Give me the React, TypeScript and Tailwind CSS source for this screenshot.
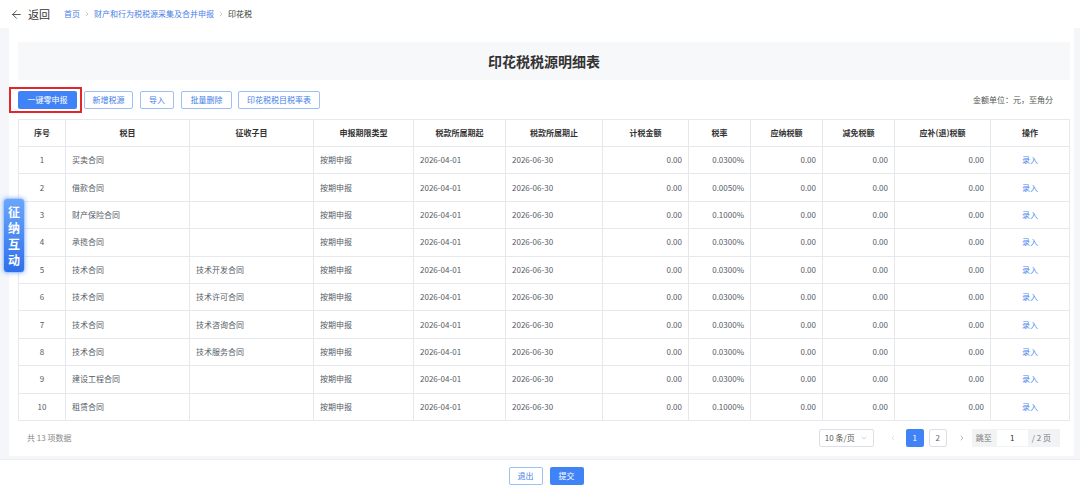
import React from "react";
import { ArrowLeft, ChevronRight, ChevronLeft, ChevronDown } from "lucide-react";

type Row = {
  no: number;
  item: string;
  sub: string;
  rate: string;
};

const rows: Row[] = [
  { no: 1, item: "买卖合同", sub: "", rate: "0.0300%" },
  { no: 2, item: "借款合同", sub: "", rate: "0.0050%" },
  { no: 3, item: "财产保险合同", sub: "", rate: "0.1000%" },
  { no: 4, item: "承揽合同", sub: "", rate: "0.0300%" },
  { no: 5, item: "技术合同", sub: "技术开发合同", rate: "0.0300%" },
  { no: 6, item: "技术合同", sub: "技术许可合同", rate: "0.0300%" },
  { no: 7, item: "技术合同", sub: "技术咨询合同", rate: "0.0300%" },
  { no: 8, item: "技术合同", sub: "技术服务合同", rate: "0.0300%" },
  { no: 9, item: "建设工程合同", sub: "", rate: "0.0300%" },
  { no: 10, item: "租赁合同", sub: "", rate: "0.1000%" },
];

const headers = [
  "序号",
  "税目",
  "征收子目",
  "申报期限类型",
  "税款所属期起",
  "税款所属期止",
  "计税金额",
  "税率",
  "应纳税额",
  "减免税额",
  "应补(退)税额",
  "操作",
];

const colWidths = [47, 124, 124, 100, 92, 97, 86, 62, 72, 72, 96, 79];

const cell = "border border-[#e6e8eb] px-[6px]";

export default function App() {
  return (
    <div
      className="w-[1080px] h-[491px] flex flex-col bg-white text-[8px] text-[#555b66] relative overflow-hidden"
      style={{ fontFamily: '"Noto Sans CJK SC", "Noto Sans", sans-serif' }}
    >
      {/* Top bar */}
      <div className="h-[28px] flex items-center pl-[10px] shrink-0">
        <div className="flex items-center gap-[5px] text-[#333]">
          <ArrowLeft className="w-[13px] h-[13px]" strokeWidth={1.5} />
          <span className="text-[11px] leading-none">返回</span>
        </div>
        <div className="flex items-center ml-[14px] gap-[3px] leading-none">
          <span className="text-[#4a80e6]">首页</span>
          <ChevronRight className="w-[8px] h-[8px] text-[#999]" strokeWidth={1.5} />
          <span className="text-[#4a80e6]">财产和行为税税源采集及合并申报</span>
          <ChevronRight className="w-[8px] h-[8px] text-[#999]" strokeWidth={1.5} />
          <span className="text-[#333]">印花税</span>
        </div>
      </div>

      {/* Content area */}
      <div className="flex-1 bg-[#f4f6f9] flex pl-[9px] pr-[7px] pb-[3px] min-h-0">
        <div className="flex-1 bg-white pl-[9px] pr-[4px] pt-[14px] flex flex-col">
          {/* Title band */}
          <div className="h-[38px] bg-[#f7f8fa] flex items-center justify-center shrink-0">
            <h1 className="text-[14px] font-bold text-[#333] leading-none">印花税税源明细表</h1>
          </div>

          {/* Toolbar */}
          <div className="mt-[11px] h-[18px] flex items-center justify-between shrink-0">
            <div className="flex items-center">
              <div className="relative">
                <button className="h-[18px] w-[59px] bg-[#3f83f6] text-white rounded-[2px] leading-none">
                  一键零申报
                </button>
                <span className="absolute -left-[9px] -right-[5px] -top-[4px] -bottom-[4px] border-2 border-[#e3262b] pointer-events-none" />
              </div>
              <button className="ml-[7px] h-[18px] w-[49px] border border-[#9fc0f5] text-[#3f7ee8] rounded-[2px] leading-none">
                新增税源
              </button>
              <button className="ml-[7px] h-[18px] w-[34px] border border-[#9fc0f5] text-[#3f7ee8] rounded-[2px] leading-none">
                导入
              </button>
              <button className="ml-[7px] h-[18px] w-[51px] border border-[#9fc0f5] text-[#3f7ee8] rounded-[2px] leading-none">
                批量删除
              </button>
              <button className="ml-[6px] h-[18px] w-[82px] border border-[#9fc0f5] text-[#3f7ee8] rounded-[2px] leading-none">
                印花税税目税率表
              </button>
            </div>
            <span className="mr-[17px] text-[#555]">金额单位：元，至角分</span>
          </div>

          {/* Table */}
          <table className="mt-[10px] table-fixed border-collapse w-[1051px] shrink-0">
            <colgroup>
              {colWidths.map((w, i) => (
                <col key={i} style={{ width: w }} />
              ))}
            </colgroup>
            <thead>
              <tr className="h-[27px]">
                {headers.map((h) => (
                  <th key={h} className={`${cell} font-bold text-[#333] text-center`}>
                    {h}
                  </th>
                ))}
              </tr>
            </thead>
            <tbody>
              {rows.map((r) => (
                <tr key={r.no} className="h-[27.4px]">
                  <td className={`${cell} text-center`}>{r.no}</td>
                  <td className={cell}>{r.item}</td>
                  <td className={cell}>{r.sub}</td>
                  <td className={cell}>按期申报</td>
                  <td className={cell}>2026-04-01</td>
                  <td className={cell}>2026-06-30</td>
                  <td className={`${cell} text-right`}>0.00</td>
                  <td className={`${cell} text-right`}>{r.rate}</td>
                  <td className={`${cell} text-right`}>0.00</td>
                  <td className={`${cell} text-right`}>0.00</td>
                  <td className={`${cell} text-right`}>0.00</td>
                  <td className={`${cell} text-center text-[#4a86ef]`}>录入</td>
                </tr>
              ))}
            </tbody>
          </table>

          {/* Footer row */}
          <div className="flex-1 flex items-center justify-between pl-[9px] pr-[10px]">
            <span className="text-[#888]">共 13 项数据</span>
            <div className="flex items-center">
              <div className="h-[18px] w-[55px] border border-[#dcdfe6] rounded-[2px] flex items-center justify-between px-[5px] text-[#555]">
                <span>10 条/页</span>
                <ChevronDown className="w-[8px] h-[8px] text-[#aaa]" strokeWidth={1.5} />
              </div>
              <ChevronLeft className="ml-[15px] w-[8px] h-[8px] text-[#c0c4cc]" strokeWidth={1.5} />
              <div className="ml-[9px] h-[18px] w-[18px] bg-[#3f83f6] text-white rounded-[2px] flex items-center justify-center">
                1
              </div>
              <div className="ml-[5px] h-[18px] w-[18px] border border-[#dcdfe6] text-[#666] rounded-[2px] flex items-center justify-center">
                2
              </div>
              <ChevronRight className="ml-[11px] w-[8px] h-[8px] text-[#777]" strokeWidth={1.5} />
              <div className="ml-[6px] h-[18px] bg-[#f2f3f5] flex items-center pl-[4px] pr-[9px] text-[#777]">
                <span>跳至</span>
                <div className="ml-[5px] h-[16px] w-[31px] bg-white flex items-center justify-center text-[#333]">
                  1
                </div>
                <span className="ml-[4px]">/ 2 页</span>
              </div>
            </div>
          </div>
        </div>
      </div>

      {/* Bottom action bar */}
      <div className="h-[32px] shrink-0 flex items-center justify-center gap-[7px] pl-[12px] border-t border-[#eceef2]">
        <button className="h-[18px] w-[34px] border border-[#9fc0f5] text-[#3f7ee8] rounded-[2px] leading-none">
          退出
        </button>
        <button className="h-[18px] w-[34px] bg-[#3f83f6] text-white rounded-[2px] leading-none">
          提交
        </button>
      </div>

      {/* Floating 征纳互动 tab */}
      <div className="absolute left-[3px] top-[198px] w-[22px] h-[75px] rounded-[4px] bg-gradient-to-b from-[#6aa6fb] to-[#2f6fea] border border-[#a9cbff] shadow-[0_0_4px_rgba(60,120,240,0.5)] flex flex-col items-center justify-center text-white text-[12px] font-bold leading-[16px]">
        <span>征</span>
        <span>纳</span>
        <span>互</span>
        <span>动</span>
      </div>
    </div>
  );
}
